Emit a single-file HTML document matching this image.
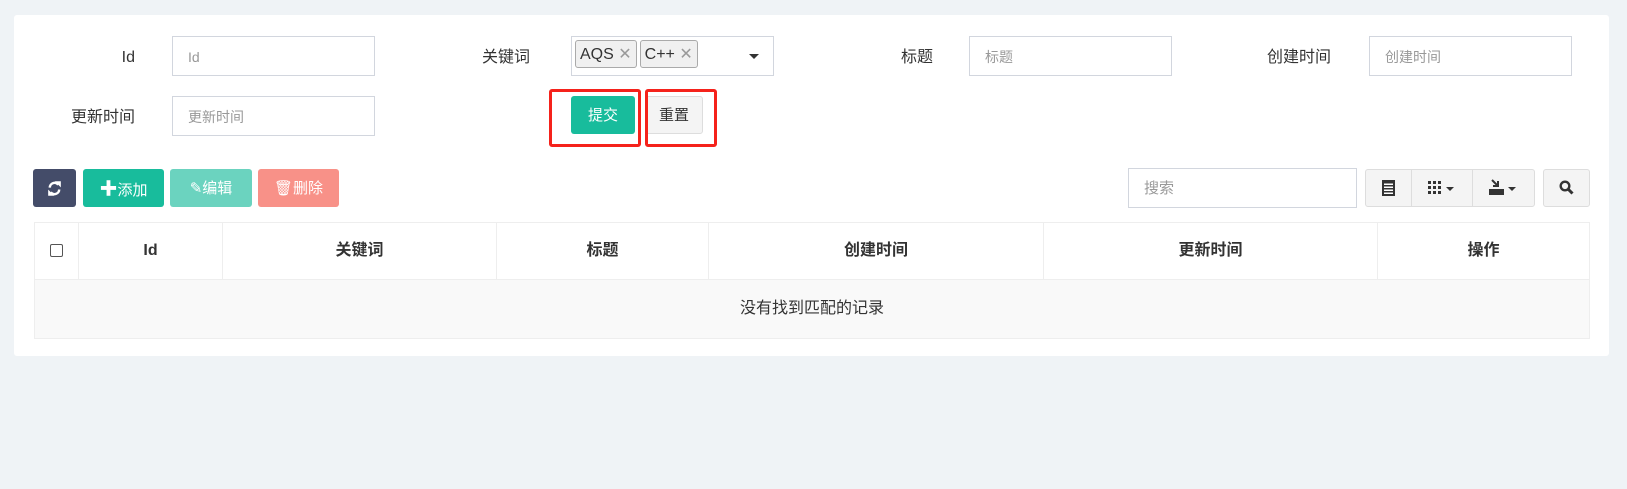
<!DOCTYPE html>
<html><head><meta charset="utf-8"><style>
*{box-sizing:border-box}
body{margin:0;width:1627px;height:489px;background:#eff3f6;font-family:"Liberation Sans","Noto Sans CJK SC",sans-serif;font-size:14px;color:#333;position:relative;overflow:hidden}
.card{position:absolute;left:14px;top:15px;width:1595px;height:341px;background:#fff;border-radius:3px}
.a{position:absolute}
.lbl{position:absolute;font-size:16px;text-align:right;line-height:44px}
.inp{position:absolute;height:40px;border:1px solid #d2d6de;background:#fff;color:#999;font-size:14px;line-height:40px;padding-left:15px}
.btn{position:absolute;height:38px;border-radius:3px;color:#fff;font-size:15px;line-height:40px;text-align:center}
.red{position:absolute;border:3px solid #f5221b;border-radius:3px}
.tag{display:inline-block;height:28px;border:1px solid #aaa;border-radius:3px;background:#f0f0f0;padding:0 4px;line-height:28px;font-size:16px;color:#333;margin:3px 0 0 3px;vertical-align:top}
.tag span{color:#999}
table{border-collapse:collapse;position:absolute;table-layout:fixed}
th,td{border:1px solid #eee;padding:0;vertical-align:middle}
th{font-size:16px;font-weight:bold;height:56px;line-height:56px}
td{background:#f9f9f9;text-align:center;font-size:16px;height:59px;line-height:50px}
</style></head><body>
<div class="card"></div>
<div class="lbl" style="left:60px;width:75px;top:36px">Id</div>
<div class="inp" style="left:172px;top:36px;width:203px">Id</div>
<div class="lbl" style="left:430px;width:100px;top:36px">关键词</div>
<div class="inp" style="left:571px;top:36px;width:203px;padding-left:0">
<span class="tag">AQS <span>✕</span></span><span class="tag">C++ <span>✕</span></span>
<span class="a" style="right:14px;top:17px;border-left:5px solid transparent;border-right:5px solid transparent;border-top:5px solid #333"></span></div>
<div class="lbl" style="left:860px;width:73px;top:36px">标题</div>
<div class="inp" style="left:969px;top:36px;width:203px">标题</div>
<div class="lbl" style="left:1230px;width:101px;top:36px">创建时间</div>
<div class="inp" style="left:1369px;top:36px;width:203px">创建时间</div>
<div class="lbl" style="left:35px;width:100px;top:96px">更新时间</div>
<div class="inp" style="left:172px;top:96px;width:203px">更新时间</div>
<div class="btn" style="left:571px;top:96px;width:64px;background:#18bc9c">提交</div>
<div class="btn" style="left:645px;top:96px;width:58px;background:#f4f4f4;border:1px solid #ddd;color:#333;line-height:38px">重置</div>
<div class="red" style="left:549px;top:89px;width:92px;height:58px"></div>
<div class="red" style="left:645px;top:89px;width:72px;height:58px"></div>
<div class="btn" style="left:33px;top:169px;width:43px;background:#444c69">
<svg class="a" style="left:14px;top:12px" width="15" height="15" viewBox="0 0 16 16"><path d="M3 7a5 5 0 0 1 9-3M13 9a5 5 0 0 1-9 3" stroke="#fff" stroke-width="2.6" fill="none"/><path d="M10 1h4v4zM6 15H2v-4z" fill="#fff" stroke="#fff" stroke-width="1.5"/></svg></div>
<div class="btn" style="left:83px;top:169px;width:81px;background:#18bc9c"><b style="font-size:18px">✚</b>添加</div>
<div class="btn" style="left:170px;top:169px;width:82px;background:#6bd3bf">✎编辑</div>
<div class="btn" style="left:258px;top:169px;width:81px;background:#f89188">🗑删除</div>
<div class="inp" style="left:1128px;top:168px;width:229px;height:40px;font-size:15px">搜索</div>
<div class="a" style="left:1365px;top:169px;width:170px;height:38px;background:#f4f4f4;border:1px solid #ddd;border-radius:3px"></div>
<div class="a" style="left:1411px;top:169px;width:1px;height:38px;background:#ddd"></div>
<div class="a" style="left:1472px;top:169px;width:1px;height:38px;background:#ddd"></div>
<div class="a" style="left:1382px;top:180px;width:13px;height:16px;border:2px solid #333;background:repeating-linear-gradient(180deg,#333 0 1.5px,#fff 1.5px 3px)"></div>
<div class="a" style="left:1428px;top:181px;width:13px;height:13px;background:repeating-linear-gradient(90deg,#333 0 3px,transparent 3px 5px),repeating-linear-gradient(180deg,transparent 0 3px,#f4f4f4 3px 4.5px)"></div>
<div class="a" style="left:1428px;top:181px;width:13px;height:13px;background:repeating-linear-gradient(180deg,transparent 0 3px,#f4f4f4 3px 5px)"></div>
<div class="a" style="left:1446px;top:187px;border-left:4px solid transparent;border-right:4px solid transparent;border-top:4px solid #333"></div>
<svg class="a" style="left:1489px;top:178px" width="15" height="17" viewBox="0 0 15 17"><path d="M3 2l6 6M9 3v5H4" stroke="#333" stroke-width="2" fill="none"/><rect x="0" y="11" width="15" height="6" fill="#333"/></svg>
<div class="a" style="left:1508px;top:187px;border-left:4px solid transparent;border-right:4px solid transparent;border-top:4px solid #333"></div>
<div class="a" style="left:1543px;top:169px;width:47px;height:38px;background:#f4f4f4;border:1px solid #ddd;border-radius:3px"></div>
<svg class="a" style="left:1559px;top:180px" width="15" height="15" viewBox="0 0 15 15"><circle cx="6" cy="6" r="4.3" stroke="#333" stroke-width="2.4" fill="none"/><path d="M9 9l4.5 4.5" stroke="#333" stroke-width="3"/></svg>
<table style="left:34px;top:222px;width:1556px">
<tr><th style="width:44px"><span style="display:inline-block;width:13px;height:13px;border:1px solid #555;border-radius:2px;vertical-align:middle"></span></th><th style="width:144px">Id</th><th style="width:274px">关键词</th><th style="width:212px">标题</th><th style="width:335px">创建时间</th><th style="width:334px">更新时间</th><th>操作</th></tr>
<tr><td colspan="7">没有找到匹配的记录</td></tr>
</table>
</body></html>
